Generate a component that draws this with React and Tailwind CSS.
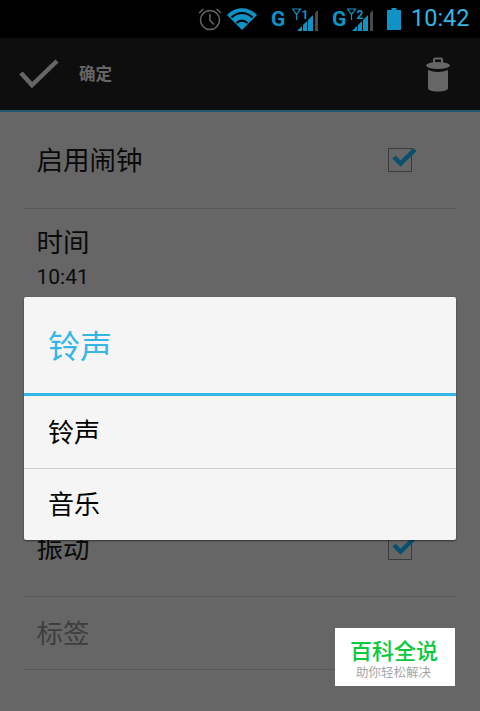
const cjk = "font-['Roboto','Noto_Sans_CJK_SC',sans-serif]"

function G({ className = '' }) {
  return <span className={`w-[13px] font-['Roboto',sans-serif] text-[21px] font-bold leading-none text-[#0f93c6] ${className}`}>G</span>
}

function SignalIcon({ n }) {
  return (
    <svg width="27" height="24" viewBox="0 0 27 24" className="mt-[1px]">
      <path d="M.5 1h8L4.500 6.500Zm4 4v7" fill="none" stroke="#0f93c6" strokeWidth="1.2" />
      <text x="9.500" y="10.500" fontFamily="Roboto, sans-serif" fontWeight="700" fontSize="12" fill="#0f93c6">{n}</text>
      <path d="M5 23l5-5v5Z" fill="#0f93c6" />
      <path d="M11 23v-6l4-4v10Z" fill="#0f93c6" />
      <path d="M16 23V12l5-5v16Z" fill="#0f93c6" />
      <path d="M23 23V5l3-3v21Z" fill="#4a4a4a" />
    </svg>
  )
}

function StatusBar() {
  return (
    <div className="flex h-[38px] items-center bg-black pl-[197px]">
      <svg width="26" height="24" viewBox="0 0 26 24" fill="none" stroke="#666666" strokeWidth="1.5">
        <circle cx="13" cy="13" r="9.500" />
        <path d="M13 7v6.500l4 4" />
        <path d="M2 6 6.500 2M24 6 19.500 2" />
      </svg>
      <svg width="30" height="22" viewBox="0 0 30 22" className="ml-[4px]">
        <path d="M0 7C8-2 22-2 30 7L15 22Z" fill="#0f93c6" />
        <path d="M4.500 9.500C11 3.500 19 3.500 25.500 9.500M9.500 15C13 12 17 12 20.500 15" fill="none" stroke="#000000" strokeWidth="2.200" />
      </svg>
      <G className="ml-[14px]" />
      <div className="ml-[8px]"><SignalIcon n="1" /></div>
      <G className="ml-[13px]" />
      <div className="ml-[2px]"><SignalIcon n="2" /></div>
      <svg width="14" height="22" viewBox="0 0 14 22" className="ml-[13px]">
        <path d="M4.500 0h5v2H14v20H0V2h4.500Z" fill="#0f93c6" />
      </svg>
      <span className="ml-[10px] font-['Roboto',sans-serif] text-[23.500px] leading-none text-[#33b5e5]">10:42</span>
    </div>
  )
}

function ActionBar() {
  return (
    <div className="flex h-[74px] items-center justify-between border-b-2 border-[#1f5a70] bg-[#0e0e0e] pl-[19px] pr-[30px]">
      <div className="flex items-center">
        <svg width="40" height="32" viewBox="0 0 40 32" fill="none" stroke="#666666" strokeWidth="4.500">
          <path d="M2 15 13 27 38 3" />
        </svg>
        <span className="ml-[20px] mt-[3px] text-[16.500px] font-bold text-[#666666]">确定</span>
      </div>
      <svg width="24" height="35" viewBox="0 0 24 35" fill="#666666">
        <path d="M7 6V2.500C7 1.200 8 .5 9 .5h6c1 0 2 .7 2 2V6h-2V2.500H9V6Z" />
        <ellipse cx="12" cy="8.500" rx="12" ry="3.500" />
        <path d="M2 13c6 2.500 14 2.500 20 0v18c0 2-3 3.500-10 3.500S2 33 2 31Z" />
      </svg>
    </div>
  )
}

function Checkbox() {
  return (
    <div className="relative h-[24px] w-[24px] border border-[#3a3a3a]">
      <svg width="26" height="22" viewBox="0 0 26 22" className="absolute -top-[2px] left-[3px]" fill="none" stroke="#08506e" strokeWidth="4.500">
        <path d="M2 10l6.500 6.500L23 2.500" />
      </svg>
    </div>
  )
}

function Row({ title, sub, check, muted, height = 'h-[97px]' }) {
  return (
    <div className={`flex ${height} items-center justify-between border-b border-[#585858] pl-[12.500px] pr-[44px]`}>
      <div className={sub ? 'pt-[8px]' : ''}>
        <div className={`text-[26.500px] leading-[33px] ${muted ? 'text-[#3e3e3e]' : 'text-[#0a0a0a]'}`}>{title}</div>
        {sub && <div className="text-[21px] leading-[37px] text-[#0a0a0a]">{sub}</div>}
      </div>
      {check && <Checkbox />}
    </div>
  )
}

function Dialog() {
  return (
    <div className="absolute left-[24px] top-[297px] w-[432px] rounded-[2px] bg-[#f5f5f5] shadow-[0_1px_2px_rgba(0,0,0,0.5)]">
      <div className="flex h-[99px] items-center border-b-[3px] border-[#33b5e5] pl-[24px] pt-[3px] text-[32px] text-[#33b5e5]">铃声</div>
      <div className="flex h-[73px] items-center border-b border-[#cfcfcf] pl-[24px] pt-[2px] text-[26px] text-black">铃声</div>
      <div className="flex h-[71px] items-center pl-[24px] pt-[2px] text-[26px] text-black">音乐</div>
    </div>
  )
}

export default function App() {
  return (
    <div className={`relative h-[711px] w-[480px] overflow-hidden bg-[#666666] ${cjk}`}>
      <StatusBar />
      <ActionBar />
      <div className="px-[24px]">
        <Row title="启用闹钟" check />
        <Row title="时间" sub="10:41" />
        {/* rows behind the dialog */}
        <div className="h-[194px]" />
        <Row title="振动" check />
        <Row title="标签" muted height="h-[73px]" />
      </div>
      <Dialog />
      <div className="absolute left-[335px] top-[628px] flex h-[58px] w-[120px] flex-col items-center justify-center bg-white pt-[4px]">
        <div className="-ml-[2px] text-[22px] font-medium leading-[26px] text-[#0cc93c]">百科全说</div>
        <div className="-ml-[3px] text-[12.500px] leading-[15px] text-[#a5a5a5]">助你轻松解决</div>
      </div>
    </div>
  )
}
